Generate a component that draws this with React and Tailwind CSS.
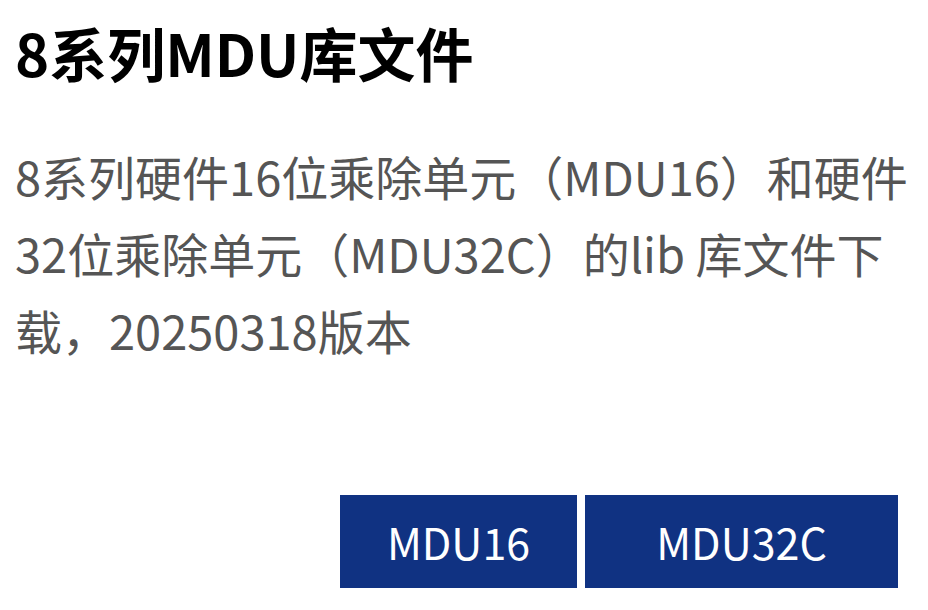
import React from 'react';

const App = () => {
  return (
    <div className="w-[928px] h-[610px] bg-white overflow-hidden flex flex-col px-[15px] font-['Noto_Sans_CJK_SC','Noto_Sans',sans-serif]">
      <h1 className="mt-[14px] text-[58px] leading-[76px] font-bold text-black">8系列MDU库文件</h1>
      <p className="mt-[47px] text-[47px] leading-[77px] text-[#555555] w-[900px]">
        8系列硬件16位乘除单元（MDU16）和硬件32位乘除单元（MDU32C）的lib 库文件下载，20250318版本
      </p>
      <div className="mt-auto mb-[22px] flex justify-end gap-[8px] pr-[15px]">
        <button className="w-[237px] h-[93px] bg-[#103282] text-white text-[43px]">MDU16</button>
        <button className="w-[313px] h-[93px] bg-[#103282] text-white text-[43px]">MDU32C</button>
      </div>
    </div>
  );
};

export default App;
